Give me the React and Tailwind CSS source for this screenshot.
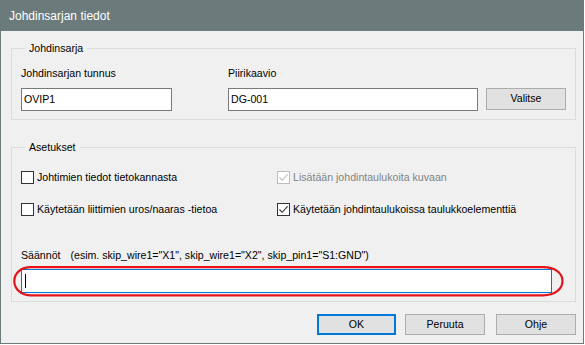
import React from "react";

function Box({ checked, disabled }) {
  const stroke = disabled ? "#bcbcbc" : "#333333";
  return (
    <span
      className={`inline-flex w-[13px] h-[13px] shrink-0 items-center justify-center bg-white border ${
        disabled ? "border-[#bcbcbc]" : "border-[#333333]"
      }`}
    >
      {checked && (
        <svg width="11" height="11" viewBox="0 0 11 11">
          <path d="M1.5 5.5 L4.2 8.3 L9.6 2.4" fill="none" stroke={stroke} strokeWidth="1.1" />
        </svg>
      )}
    </span>
  );
}

function Check({ label, checked, disabled }) {
  return (
    <div className="flex items-center gap-[3px] h-[13px]">
      <Box checked={checked} disabled={disabled} />
      <span className={`leading-[13px] ${disabled ? "text-[#838383]" : "text-black"}`}>{label}</span>
    </div>
  );
}

function Btn({ children, primary, className = "" }) {
  return (
    <div
      className={`h-[21px] w-[79px] flex items-center justify-center bg-[#e1e1e1] text-black ${
        primary ? "border-2 border-[#0078d7]" : "border border-[#adadad]"
      } ${className}`}
    >
      {children}
    </div>
  );
}

export default function App() {
  return (
    <div
      className="w-[585px] h-[345px] bg-white overflow-hidden text-[10.6px] text-black"
      style={{ fontFamily: '"Liberation Sans", Arial, sans-serif' }}
    >
      <div className="w-[584px] h-[344px] flex flex-col border-x border-b border-[#6b7a7b] bg-[#f0f0f0]">
        <div className="h-[31px] shrink-0 bg-[#6b7a7b] flex items-center pl-[8px] text-white text-[12px]">
          Johdinsarjan tiedot
        </div>

        <div className="flex flex-col pl-[10px] pr-[7px]">
          <fieldset className="mt-[10px] border border-[#dcdcdc] px-[9px] pb-[8px]">
            <legend className="ml-[4px] px-[4px] leading-[14px]">Johdinsarja</legend>
            <div className="flex items-end mt-[11px]">
              <div className="flex flex-col w-[151px]">
                <span className="leading-[14px]">Johdinsarjan tunnus</span>
                <div className="mt-[8px] h-[23px] bg-white border border-[#7a7a7a] flex items-center pl-[2px]">
                  OVIP1
                </div>
              </div>
              <div className="flex flex-col w-[250px] ml-[56px]">
                <span className="leading-[14px]">Piirikaavio</span>
                <div className="mt-[8px] h-[23px] bg-white border border-[#7a7a7a] flex items-center pl-[2px]">
                  DG-001
                </div>
              </div>
              <Btn className="ml-[8px] w-[80px] h-[22px] mb-[1px]">Valitse</Btn>
            </div>
          </fieldset>

          <fieldset className="mt-[20px] border border-[#dcdcdc] px-[9px] pb-[8px]">
            <legend className="ml-[4px] px-[4px] leading-[14px]">Asetukset</legend>
            <div className="grid grid-cols-[256px_1fr] gap-y-[19px] mt-[17px]">
              <Check label="Johtimien tiedot tietokannasta" />
              <Check label="Lisätään johdintaulukoita kuvaan" checked disabled />
              <Check label="Käytetään liittimien uros/naaras -tietoa" />
              <Check label="Käytetään johdintaulukoissa taulukkoelementtiä" checked />
            </div>
            <div className="mt-[32px] leading-[14px] flex">
              <span>Säännöt</span>
              <span className="ml-[10px]">(esim. skip_wire1="X1", skip_wire1="X2", skip_pin1="S1:GND")</span>
            </div>
            <div className="relative mt-[7px] w-[531px] h-[24px]">
              <div className="h-full bg-white border border-[#0078d7] flex items-center pl-[3px]">
                <span className="w-px h-[14px] bg-black" />
              </div>
              <svg
                className="absolute left-[-8px] top-[-3px] pointer-events-none"
                width="551"
                height="31"
                viewBox="0 0 551 31"
              >
                <path
                  d="M18 1.2 H530 C542 1.2 549.5 7 549.5 15 C549.5 23 542 29.3 530 29.3 H18 C8 29.3 1.3 23 1.3 15 C1.3 7 8 1.2 18 1.2 Z"
                  fill="none"
                  stroke="#e5141b"
                  strokeWidth="2.2"
                />
              </svg>
            </div>
          </fieldset>

          <div className="flex justify-end mt-[12px]">
            <Btn primary>OK</Btn>
            <Btn className="ml-[9px] w-[80px]">Peruuta</Btn>
            <Btn className="ml-[11px] w-[80px]">Ohje</Btn>
          </div>
        </div>
      </div>
    </div>
  );
}
